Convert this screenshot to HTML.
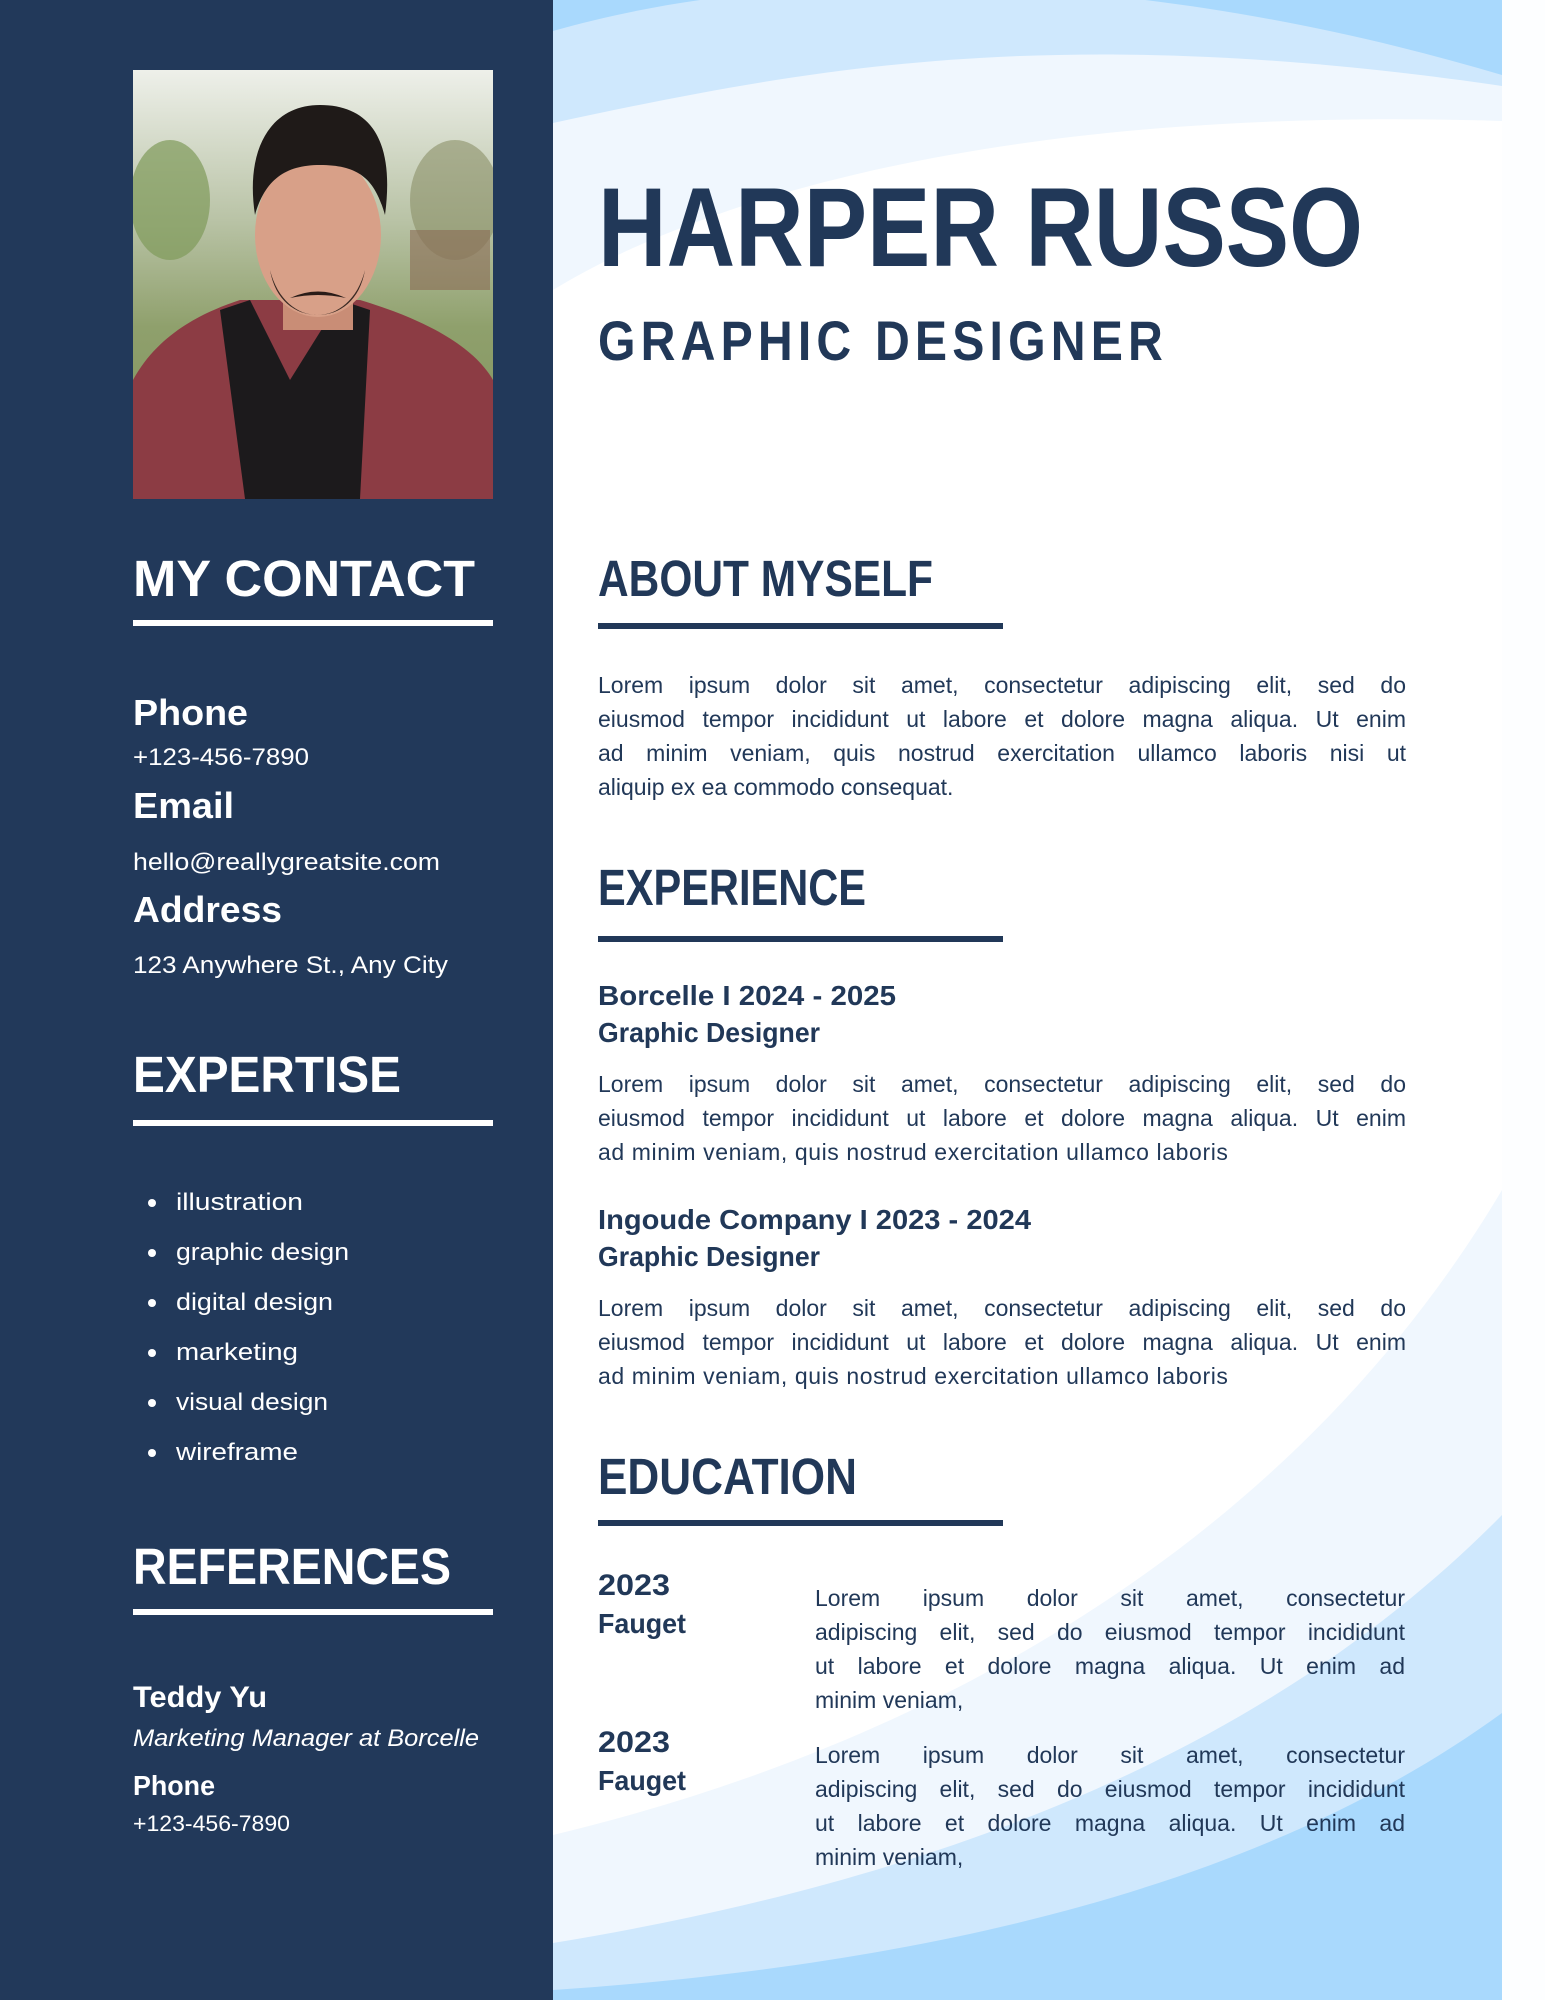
<!DOCTYPE html>
<html><head><meta charset="utf-8">
<style>
html,body{margin:0;padding:0;}
body{width:1545px;height:2000px;position:relative;overflow:hidden;background:#fdfeff;font-family:"Liberation Sans",sans-serif;}
svg.bg{position:absolute;left:0;top:0;}
.p{position:absolute;color:#213858;font-size:23px;line-height:34px;font-family:"Liberation Sans",sans-serif;}
.p div{text-align:justify;text-align-last:justify;}
.p div.l{text-align-last:left;}
</style></head><body>
<svg class="bg" width="1545" height="2000" viewBox="0 0 1545 2000" xmlns="http://www.w3.org/2000/svg">
<rect x="0" y="0" width="553" height="2000" fill="#22395a"/>
<rect x="553" y="0" width="949" height="2000" fill="#ffffff"/>
<rect x="553" y="0" width="949" height="400" fill="#a9d9fd"/>
<path d="M553,31 C800,-40 1150,-30 1502,75 L1502,400 L553,400 Z" fill="#cfe8fd"/>
<path d="M553,123 C800,70 1050,20 1502,86 L1502,400 L553,400 Z" fill="#f0f7fe"/>
<path d="M553,290 C700,200 1000,105 1502,121 L1502,400 L553,400 Z" fill="#ffffff"/>
<path d="M553,1835 C950,1740 1300,1530 1502,1190 L1502,2000 L553,2000 Z" fill="#f0f7fe"/>
<path d="M553,1943 C1000,1870 1300,1720 1502,1515 L1502,2000 L553,2000 Z" fill="#cfe8fd"/>
<path d="M553,1990 C1000,1960 1300,1860 1502,1713 L1502,2000 L553,2000 Z" fill="#a9d9fd"/>
<defs>
<linearGradient id="pg" x1="0" y1="0" x2="0" y2="1">
<stop offset="0" stop-color="#eef0ea"/><stop offset="0.35" stop-color="#b9c3a6"/><stop offset="0.6" stop-color="#8fa06c"/><stop offset="1" stop-color="#7e8f5c"/>
</linearGradient>
<clipPath id="pc"><rect x="133" y="70" width="360" height="429"/></clipPath>
</defs>
<g clip-path="url(#pc)">
<rect x="133" y="70" width="360" height="429" fill="url(#pg)"/>
<ellipse cx="170" cy="200" rx="40" ry="60" fill="#7f9a5a" opacity="0.7"/>
<ellipse cx="455" cy="200" rx="45" ry="60" fill="#8a9068" opacity="0.6"/>
<rect x="410" y="230" width="80" height="60" fill="#8a6a55" opacity="0.6"/>
<path d="M133,380 C160,330 210,310 240,300 L360,300 C410,315 470,340 493,380 L493,499 L133,499 Z" fill="#8c3c44"/>
<path d="M220,310 L250,300 L290,380 L340,300 L370,310 L360,499 L245,499 Z" fill="#1c1a1c"/>
<rect x="283" y="280" width="70" height="50" fill="#c98d76"/>
<ellipse cx="318" cy="235" rx="63" ry="82" fill="#d8a088"/>
<path d="M255,215 C245,150 270,105 320,105 C370,105 395,140 385,215 C375,180 360,165 320,165 C285,165 265,180 255,215 Z" fill="#1f1a18"/>
<path d="M270,270 C285,330 350,330 365,270 C360,300 340,315 318,315 C295,315 275,300 270,270 Z" fill="#3a2a24"/>
<path d="M290,298 Q318,285 346,298 Q318,292 290,298 Z" fill="#2a1c18"/>
</g>
<g font-family="Liberation Sans, sans-serif" font-weight="bold" fill="#213858">
<text x="598" y="266" font-size="112" textLength="765" lengthAdjust="spacingAndGlyphs">HARPER RUSSO</text>
<text x="598" y="360" font-size="56" textLength="570" lengthAdjust="spacingAndGlyphs" letter-spacing="6">GRAPHIC DESIGNER</text>
<text x="598" y="596" font-size="51" textLength="335" lengthAdjust="spacingAndGlyphs">ABOUT MYSELF</text>
<text x="598" y="905" font-size="51" textLength="268" lengthAdjust="spacingAndGlyphs">EXPERIENCE</text>
<text x="598" y="1494" font-size="51" textLength="259" lengthAdjust="spacingAndGlyphs">EDUCATION</text>
<rect x="598" y="623" width="405" height="6"/>
<rect x="598" y="936" width="405" height="6"/>
<rect x="598" y="1520" width="405" height="6"/>
<text x="598" y="1005" font-size="28" textLength="298" lengthAdjust="spacingAndGlyphs">Borcelle  I 2024 - 2025</text>
<text x="598" y="1042" font-size="28" textLength="222" lengthAdjust="spacingAndGlyphs">Graphic Designer</text>
<text x="598" y="1229" font-size="28" textLength="433" lengthAdjust="spacingAndGlyphs">Ingoude Company  I 2023 - 2024</text>
<text x="598" y="1266" font-size="28" textLength="222" lengthAdjust="spacingAndGlyphs">Graphic Designer</text>
<text x="598" y="1595" font-size="30" textLength="72" lengthAdjust="spacingAndGlyphs">2023</text>
<text x="598" y="1633" font-size="28" textLength="88" lengthAdjust="spacingAndGlyphs">Fauget</text>
<text x="598" y="1752" font-size="30" textLength="72" lengthAdjust="spacingAndGlyphs">2023</text>
<text x="598" y="1790" font-size="28" textLength="88" lengthAdjust="spacingAndGlyphs">Fauget</text>
</g>
<g font-family="Liberation Sans, sans-serif" font-weight="bold" fill="#ffffff">
<text x="133" y="596" font-size="51" textLength="342" lengthAdjust="spacingAndGlyphs">MY CONTACT</text>
<text x="133" y="1092" font-size="51" textLength="268" lengthAdjust="spacingAndGlyphs">EXPERTISE</text>
<text x="133" y="1584" font-size="51" textLength="318" lengthAdjust="spacingAndGlyphs">REFERENCES</text>
<rect x="133" y="620" width="360" height="6"/>
<rect x="133" y="1120" width="360" height="6"/>
<rect x="133" y="1609" width="360" height="6"/>
<text x="133" y="725" font-size="36" textLength="115" lengthAdjust="spacingAndGlyphs">Phone</text>
<text x="133" y="818" font-size="36" textLength="101" lengthAdjust="spacingAndGlyphs">Email</text>
<text x="133" y="922" font-size="36" textLength="149" lengthAdjust="spacingAndGlyphs">Address</text>
<text x="133" y="1707" font-size="30" textLength="134" lengthAdjust="spacingAndGlyphs">Teddy Yu</text>
<text x="133" y="1795" font-size="28" textLength="82" lengthAdjust="spacingAndGlyphs">Phone</text>
</g>
<g font-family="Liberation Sans, sans-serif" fill="#ffffff" font-size="24">
<text x="133" y="765" textLength="176" lengthAdjust="spacingAndGlyphs">+123-456-7890</text>
<text x="133" y="870" textLength="307" lengthAdjust="spacingAndGlyphs">hello@reallygreatsite.com</text>
<text x="133" y="973" textLength="315" lengthAdjust="spacingAndGlyphs">123 Anywhere St., Any City</text>
<circle cx="152" cy="1203" r="4"/><text x="176" y="1210" textLength="127" lengthAdjust="spacingAndGlyphs">illustration</text>
<circle cx="152" cy="1253" r="4"/><text x="176" y="1260" textLength="173" lengthAdjust="spacingAndGlyphs">graphic design</text>
<circle cx="152" cy="1303" r="4"/><text x="176" y="1310" textLength="157" lengthAdjust="spacingAndGlyphs">digital design</text>
<circle cx="152" cy="1353" r="4"/><text x="176" y="1360" textLength="122" lengthAdjust="spacingAndGlyphs">marketing</text>
<circle cx="152" cy="1403" r="4"/><text x="176" y="1410" textLength="152" lengthAdjust="spacingAndGlyphs">visual design</text>
<circle cx="152" cy="1453" r="4"/><text x="176" y="1460" textLength="122" lengthAdjust="spacingAndGlyphs">wireframe</text>
<text x="133" y="1746" font-style="italic" textLength="346" lengthAdjust="spacingAndGlyphs">Marketing Manager at Borcelle</text>
<text x="133" y="1831" font-size="22" textLength="157" lengthAdjust="spacingAndGlyphs">+123-456-7890</text>
</g>
</svg>

<div class="p" style="left:598px;top:668px;width:808px;">
<div>Lorem ipsum dolor sit amet, consectetur adipiscing elit, sed do</div>
<div>eiusmod tempor incididunt ut labore et dolore magna aliqua. Ut enim</div>
<div>ad minim veniam, quis nostrud exercitation ullamco laboris nisi ut</div>
<div class="l">aliquip ex ea commodo consequat.</div>
</div>
<div class="p" style="left:598px;top:1067px;width:808px;">
<div>Lorem ipsum dolor sit amet, consectetur adipiscing elit, sed do</div>
<div>eiusmod tempor incididunt ut labore et dolore magna aliqua. Ut enim</div>
<div class="l" style="letter-spacing:0.6px">ad minim veniam, quis nostrud exercitation ullamco laboris</div>
</div>
<div class="p" style="left:598px;top:1291px;width:808px;">
<div>Lorem ipsum dolor sit amet, consectetur adipiscing elit, sed do</div>
<div>eiusmod tempor incididunt ut labore et dolore magna aliqua. Ut enim</div>
<div class="l" style="letter-spacing:0.6px">ad minim veniam, quis nostrud exercitation ullamco laboris</div>
</div>
<div class="p" style="left:815px;top:1581px;width:590px;">
<div>Lorem ipsum dolor sit amet, consectetur</div>
<div>adipiscing elit, sed do eiusmod tempor incididunt</div>
<div>ut labore et dolore magna aliqua. Ut enim ad</div>
<div class="l">minim veniam,</div>
</div>
<div class="p" style="left:815px;top:1738px;width:590px;">
<div>Lorem ipsum dolor sit amet, consectetur</div>
<div>adipiscing elit, sed do eiusmod tempor incididunt</div>
<div>ut labore et dolore magna aliqua. Ut enim ad</div>
<div class="l">minim veniam,</div>
</div>
</body></html>
